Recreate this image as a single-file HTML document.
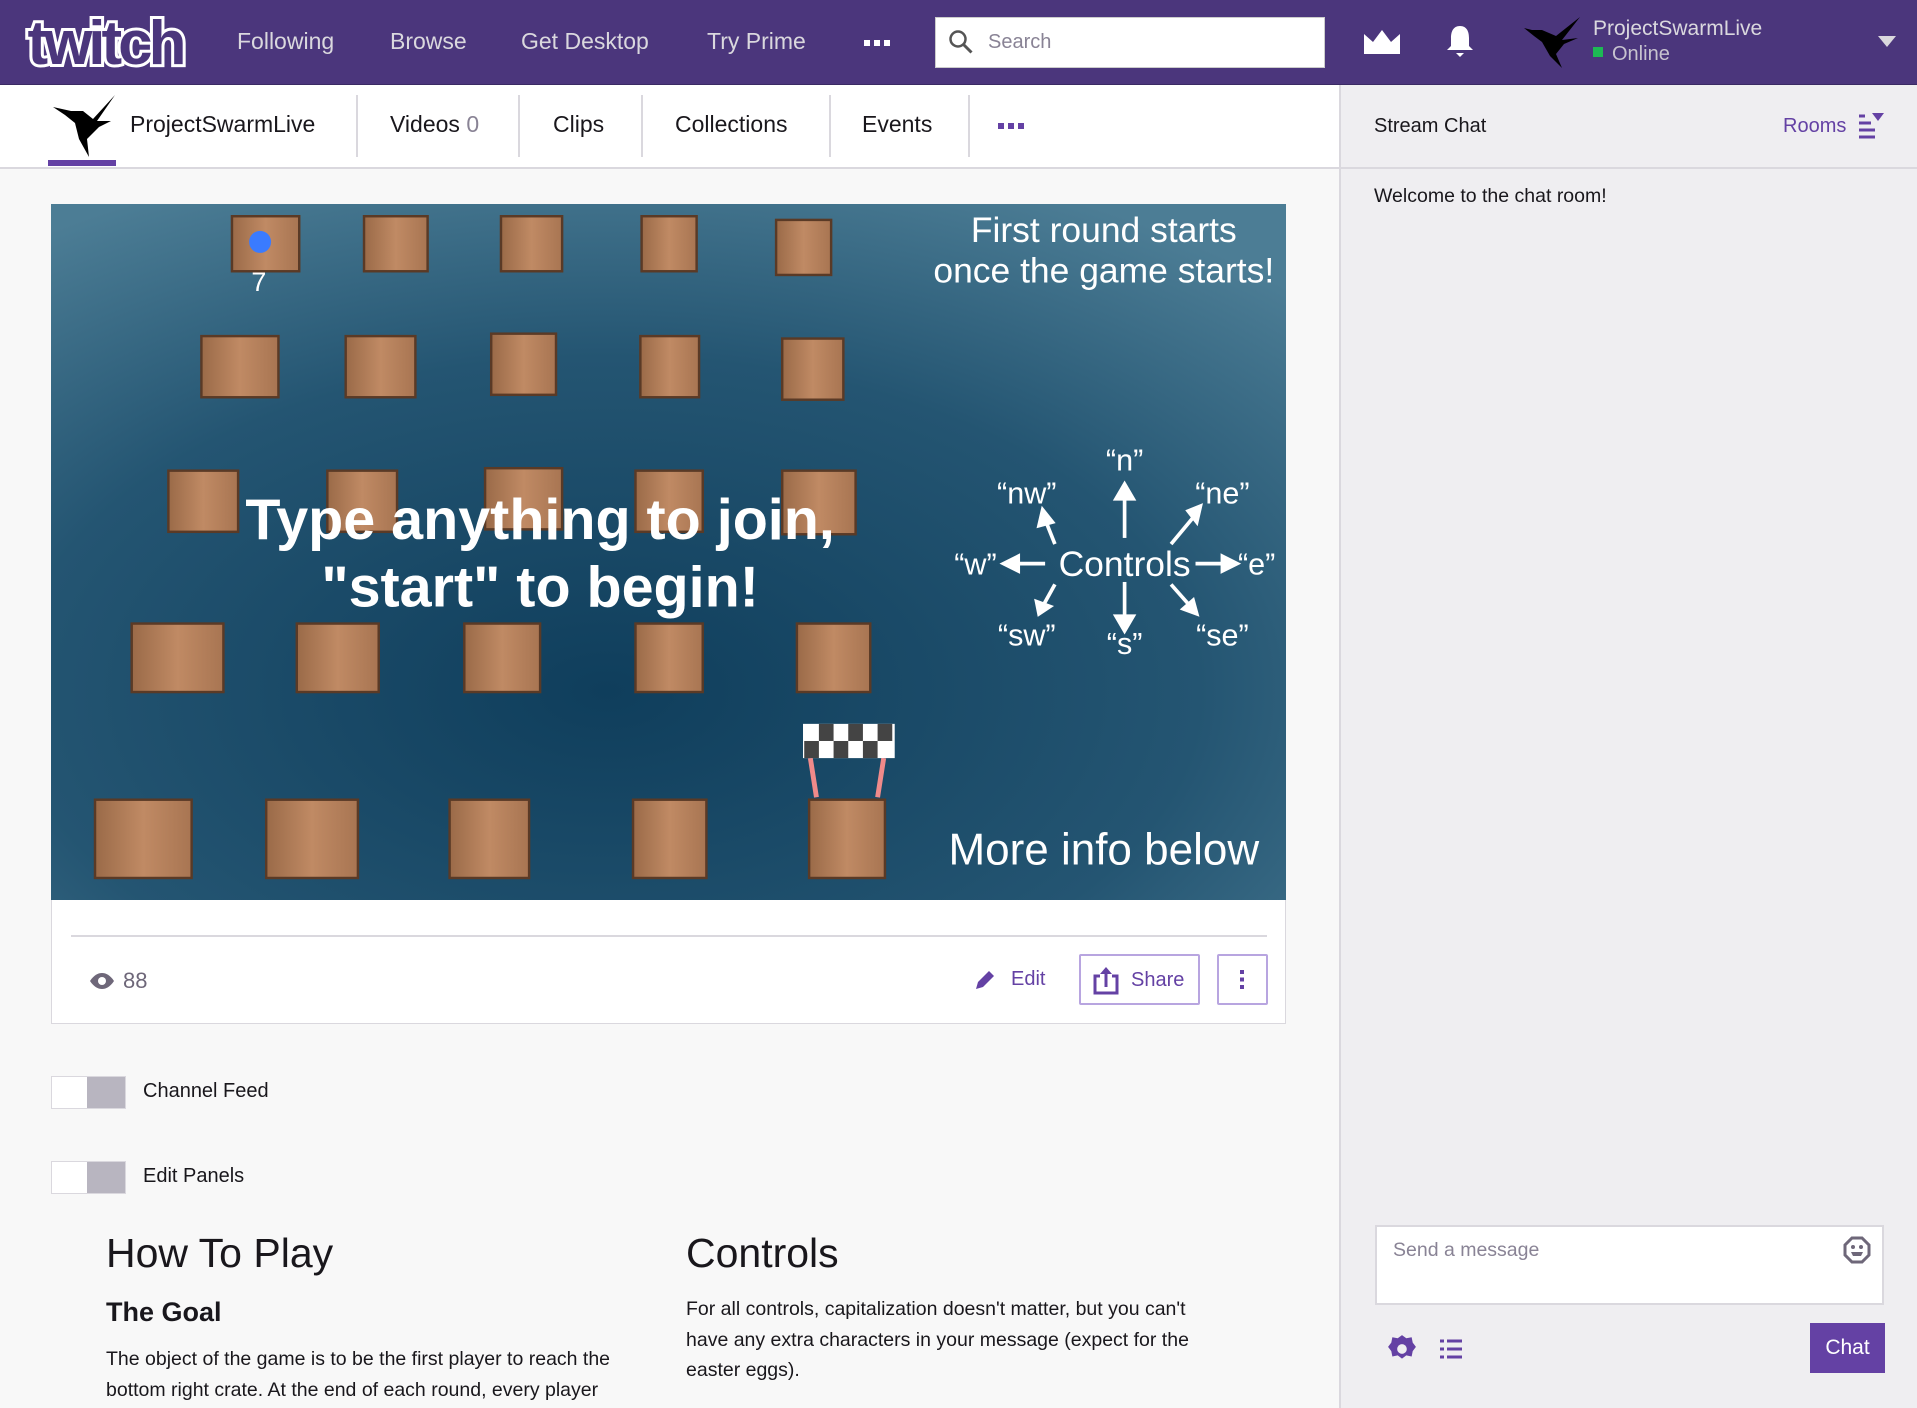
<!DOCTYPE html>
<html><head><meta charset="utf-8">
<style>
*{margin:0;padding:0;box-sizing:border-box}
body{width:1917px;height:1408px;overflow:hidden;background:#f8f8f8;font-family:"Liberation Sans",Arial,sans-serif;position:relative}
.abs{position:absolute}
#top{left:0;top:0;width:1917px;height:85px;background:#4b367c;border-bottom:1px solid #3a2a63}
.nav{color:#dad8de;font-size:23px;top:28px}
#sub{left:0;top:85px;width:1339px;height:84px;background:#fff;border-bottom:2px solid #dad8de}
.tab{font-size:23px;color:#19171c;top:26px}
.sep{top:10px;width:2px;height:62px;background:#dad8de}
#chat{left:1339px;top:85px;width:578px;height:1323px;background:#efeef1;border-left:2px solid #dad8de}
</style></head><body>

<div id="top" class="abs">
  <svg class="abs" style="left:22px;top:10px" width="166" height="64" viewBox="0 0 166 64">
    <text x="83" y="54" text-anchor="middle" font-family="Liberation Sans" font-weight="bold" font-size="62" letter-spacing="-4" fill="#4b367c" stroke="#fff" stroke-width="6" paint-order="stroke" stroke-linejoin="miter">twitch</text>
  </svg>
  <div class="abs nav" style="left:237px">Following</div>
  <div class="abs nav" style="left:390px">Browse</div>
  <div class="abs nav" style="left:521px">Get Desktop</div>
  <div class="abs nav" style="left:707px">Try Prime</div>
  <div class="abs" style="left:864px;top:40px;width:26px;height:6px;background:repeating-linear-gradient(90deg,#fff 0 6px,transparent 6px 10px)"></div>
  <div class="abs" style="left:935px;top:17px;width:390px;height:51px;background:#fff;border:1px solid #ccc">
    <svg class="abs" style="left:12px;top:11px" width="26" height="26" viewBox="0 0 26 26"><circle cx="10" cy="10" r="7.5" fill="none" stroke="#555" stroke-width="2.5"/><path d="M15.5 15.5l8 8" stroke="#555" stroke-width="3"/></svg>
    <div class="abs" style="left:52px;top:13px;font-size:20px;color:#898395">Search</div>
  </div>
  <svg class="abs" style="left:1364px;top:30px" width="36" height="24" viewBox="0 0 36 24"><path d="M0 4l9 8 9-12 9 12 9-8v20h-36z" fill="#fff"/></svg>
  <svg class="abs" style="left:1446px;top:24px" width="28" height="36" viewBox="0 0 28 36"><path d="M14 2c7 0 9 6 9 12v8l4 4h-26l4-4v-8c0-6 2-12 9-12z" fill="#fff"/><path d="M10 29h8l-4 4z" fill="#fff"/></svg>
  <svg class="abs" style="left:1520px;top:16px" width="62" height="54" viewBox="0 0 62 54"><path d="M60 1L36 20 22 14 12 14 4 12 14 20 22 26 30 40 42 52 36 38 44 28 58 22 42 24z" fill="#000"/></svg>
  <div class="abs" style="left:1593px;top:17px;font-size:21px;color:#dad8de">ProjectSwarmLive</div>
  <div class="abs" style="left:1593px;top:47px;width:10px;height:10px;background:#1db954"></div>
  <div class="abs" style="left:1612px;top:43px;font-size:20px;color:#c7c3cf">Online</div>
  <svg class="abs" style="left:1878px;top:36px" width="18" height="12"><path d="M0 0h18l-9 11z" fill="#dad8de"/></svg>
</div>

<div id="sub" class="abs">
  <svg class="abs" style="left:49px;top:8px" width="68" height="66" viewBox="0 0 68 66"><path d="M66 2L44 26 34 18 22 18 4 14 16 22 26 30 30 46 40 64 38 46 50 34 62 28 48 28z" fill="#000"/></svg>
  <div class="abs" style="left:48px;top:75px;width:68px;height:6px;background:#6441a4"></div>
  <div class="abs tab" style="left:130px">ProjectSwarmLive</div>
  <div class="abs sep" style="left:356px"></div>
  <div class="abs tab" style="left:390px">Videos <span style="color:#898395">0</span></div>
  <div class="abs sep" style="left:518px"></div>
  <div class="abs tab" style="left:553px">Clips</div>
  <div class="abs sep" style="left:641px"></div>
  <div class="abs tab" style="left:675px">Collections</div>
  <div class="abs sep" style="left:829px"></div>
  <div class="abs tab" style="left:862px">Events</div>
  <div class="abs sep" style="left:968px"></div>
  <div class="abs" style="left:998px;top:38px;width:26px;height:6px;background:repeating-linear-gradient(90deg,#6441a4 0 6px,transparent 6px 10px)"></div>
</div>

<!-- video -->
<svg class="abs" style="left:51px;top:204px" width="1235" height="696" viewBox="42 167 1010 569" preserveAspectRatio="none">
  <defs>
    <radialGradient id="w" cx="0.45" cy="0.7" r="0.8">
      <stop offset="0" stop-color="#0f3e5c"/><stop offset="0.6" stop-color="#245572"/><stop offset="1" stop-color="#4c7d95"/>
    </radialGradient>
    <linearGradient id="c" x1="0" x2="1"><stop offset="0" stop-color="#9a6a48"/><stop offset="0.5" stop-color="#c08a64"/><stop offset="1" stop-color="#a87552"/></linearGradient>
  </defs>
  <rect x="42" y="167" width="1010" height="569" fill="url(#w)"/>
  <g fill="url(#c)" stroke="#5a3a26" stroke-width="2">
    <rect x="190" y="177" width="55" height="45"/><rect x="298" y="177" width="52" height="45"/><rect x="410" y="177" width="50" height="45"/><rect x="525" y="177" width="45" height="45"/><rect x="635" y="180" width="45" height="45"/>
    <rect x="165" y="275" width="63" height="50"/><rect x="283" y="275" width="57" height="50"/><rect x="402" y="273" width="53" height="50"/><rect x="524" y="275" width="48" height="50"/><rect x="640" y="277" width="50" height="50"/>
    <rect x="138" y="385" width="57" height="50"/><rect x="268" y="385" width="57" height="50"/><rect x="397" y="383" width="63" height="50"/><rect x="520" y="385" width="55" height="50"/><rect x="640" y="385" width="60" height="52"/>
    <rect x="108" y="510" width="75" height="56"/><rect x="243" y="510" width="67" height="56"/><rect x="380" y="510" width="62" height="56"/><rect x="520" y="510" width="55" height="56"/><rect x="652" y="510" width="60" height="56"/>
    <rect x="78" y="654" width="79" height="64"/><rect x="218" y="654" width="75" height="64"/><rect x="368" y="654" width="65" height="64"/><rect x="518" y="654" width="60" height="64"/><rect x="662" y="654" width="62" height="64"/>
  </g>
  <circle cx="213" cy="198" r="9" fill="#3a7bff"/>
  <text x="212" y="238" font-size="22" fill="#fff" text-anchor="middle" font-family="Liberation Sans">7</text>
  <path d="M663 620l5 32M723 620l-5 32" stroke="#f08a8a" stroke-width="4"/>
  <rect x="657" y="592" width="75" height="28" fill="#fff"/>
  <g fill="#444"><rect x="670" y="592" width="12" height="14"/><rect x="694" y="592" width="12" height="14"/><rect x="718" y="592" width="12" height="14"/><rect x="658" y="606" width="12" height="14"/><rect x="682" y="606" width="12" height="14"/><rect x="706" y="606" width="12" height="14"/></g>
  <g font-family="Liberation Sans" fill="#fff" text-anchor="middle">
    <text x="903" y="198" font-size="29">First round starts</text>
    <text x="903" y="231" font-size="29">once the game starts!</text>
    <text x="442" y="441" font-size="47" font-weight="bold">Type anything to join,</text>
    <text x="442" y="496" font-size="47" font-weight="bold">"start" to begin!</text>
    <text x="903" y="707" font-size="36">More info below</text>
    <text x="920" y="471" font-size="29">Controls</text>
    <text x="920" y="385" font-size="25">“n”</text>
    <text x="840" y="412" font-size="25">“nw”</text>
    <text x="1000" y="412" font-size="25">“ne”</text>
    <text x="798" y="470" font-size="25">“w”</text>
    <text x="1028" y="470" font-size="25">“e”</text>
    <text x="840" y="528" font-size="25">“sw”</text>
    <text x="920" y="535" font-size="25">“s”</text>
    <text x="1000" y="528" font-size="25">“se”</text>
  </g>
  <g stroke="#fff" stroke-width="3" fill="#fff">
    <path d="M920 440v-40"/><path d="M913 408l7-12 7 12z"/>
    <path d="M920 476v36"/><path d="M913 504l7 12 7-12z"/>
    <path d="M863 445l-8-20"/><path d="M850 430l3-13 8 10z"/>
    <path d="M958 445l20-24"/><path d="M972 418l10-4-3 13z"/>
    <path d="M855 461h-25"/><path d="M833 455l-12 6 12 6z"/>
    <path d="M978 461h25"/><path d="M1000 455l12 6-12 6z"/>
    <path d="M863 478l-10 18"/><path d="M848 492l2 10 9-6z"/>
    <path d="M958 478l15 17"/><path d="M968 498l11 4-3-11z"/>
  </g>
</svg>

<!-- info card -->
<div class="abs" style="left:51px;top:900px;width:1235px;height:124px;background:#fff;border:1px solid #dad8de;border-top:none">
  <div class="abs" style="left:19px;top:35px;width:1196px;height:2px;background:#dad8de"></div>
  <svg class="abs" style="left:37px;top:72px" width="26" height="18" viewBox="0 0 26 18"><path d="M1 9c4-6 8-8 12-8s8 2 12 8c-4 6-8 8-12 8s-8-2-12-8z" fill="#6e6779"/><circle cx="13" cy="9" r="4" fill="#fff"/></svg>
  <div class="abs" style="left:71px;top:68px;font-size:22px;color:#6e6779">88</div>
  <svg class="abs" style="left:921px;top:68px" width="24" height="24" viewBox="0 0 24 24"><path d="M3 21l2-7 11-11 5 5-11 11z" fill="#6441a4"/></svg>
  <div class="abs" style="left:959px;top:68px;font-size:20px;color:#6441a4">Edit</div>
  <div class="abs" style="left:1027px;top:54px;width:121px;height:51px;border:2px solid #b8a5e0;border-radius:2px">
    <svg class="abs" style="left:12px;top:9px" width="26" height="30" viewBox="0 0 26 30"><path d="M7 11H2v17h22V11h-5" fill="none" stroke="#6441a4" stroke-width="3"/><path d="M13 22V4" stroke="#6441a4" stroke-width="3"/><path d="M7 9l6-7 6 7z" fill="#6441a4"/></svg>
    <div class="abs" style="left:50px;top:13px;font-size:20px;color:#6441a4">Share</div>
  </div>
  <div class="abs" style="left:1165px;top:54px;width:51px;height:51px;border:2px solid #b8a5e0;border-radius:2px">
    <div class="abs" style="left:21px;top:14px;width:4px;height:19px;background:repeating-linear-gradient(#6441a4 0 4px,transparent 4px 7.5px)"></div>
  </div>
</div>

<!-- toggles -->
<div class="abs" style="left:51px;top:1076px;width:75px;height:33px;background:#b8b5c0;border:1px solid #dad8de"><div style="width:35px;height:31px;background:#fff"></div></div>
<div class="abs" style="left:143px;top:1080px;font-size:20px;color:#19171c">Channel Feed</div>
<div class="abs" style="left:51px;top:1161px;width:75px;height:33px;background:#b8b5c0;border:1px solid #dad8de"><div style="width:35px;height:31px;background:#fff"></div></div>
<div class="abs" style="left:143px;top:1165px;font-size:20px;color:#19171c">Edit Panels</div>

<div class="abs" style="left:106px;top:1230px;font-size:41px;color:#19171c">How To Play</div>
<div class="abs" style="left:106px;top:1297px;font-size:27px;font-weight:bold;color:#19171c">The Goal</div>
<div class="abs" style="left:106px;top:1344px;width:560px;font-size:19.5px;line-height:30.5px;color:#19171c">The object of the game is to be the first player to reach the bottom right crate. At the end of each round, every player</div>
<div class="abs" style="left:686px;top:1230px;font-size:41px;color:#19171c">Controls</div>
<div class="abs" style="left:686px;top:1294px;width:545px;font-size:19.5px;line-height:30.5px;color:#19171c">For all controls, capitalization doesn't matter, but you can't have any extra characters in your message (expect for the easter eggs).</div>

<!-- chat -->
<div id="chat" class="abs">
  <div class="abs" style="left:0;top:0;width:576px;height:84px;border-bottom:2px solid #dad8de"></div>
  <div class="abs" style="left:33px;top:30px;font-size:20px;color:#19171c">Stream Chat</div>
  <div class="abs" style="left:442px;top:30px;font-size:20px;color:#6441a4">Rooms</div>
  <svg class="abs" style="left:518px;top:28px" width="26" height="28" viewBox="0 0 26 28"><path d="M0 3h6M0 10h12M0 17h16M0 24h16" stroke="#6441a4" stroke-width="3"/><path d="M13 0h12l-6 8z" fill="#6441a4"/></svg>
  <div class="abs" style="left:33px;top:100px;font-size:19.5px;color:#19171c">Welcome to the chat room!</div>
  <div class="abs" style="left:34px;top:1140px;width:509px;height:80px;background:#fff;border:2px solid #dad8de">
    <div class="abs" style="left:16px;top:12px;font-size:19.5px;color:#898395">Send a message</div>
    <svg class="abs" style="left:466px;top:9px" width="28" height="28" viewBox="0 0 28 28"><path d="M9 2h10l7 7v10l-7 7h-10l-7-7v-10z" fill="none" stroke="#6e6779" stroke-width="3"/><circle cx="10" cy="11" r="2" fill="#6e6779"/><circle cx="18" cy="11" r="2" fill="#6e6779"/><path d="M8 16h12l-2 4h-8z" fill="#6e6779"/></svg>
  </div>
  <svg class="abs" style="left:46px;top:1249px" width="30" height="30" viewBox="0 0 28 28"><path d="M14 1l4 3 5-1 1 5 3 4-3 4-1 5-5-1-4 3-4-3-5 1-1-5-3-4 3-4 1-5 5 1z" fill="#6441a4"/><circle cx="14" cy="14" r="4.5" fill="#efeef1"/></svg>
  <svg class="abs" style="left:99px;top:1254px" width="22" height="20" viewBox="0 0 22 20"><path d="M0 2h4M7 2h15M0 10h4M7 10h15M0 18h4M7 18h15" stroke="#6441a4" stroke-width="3"/></svg>
  <div class="abs" style="left:469px;top:1238px;width:75px;height:50px;background:#6441a4;color:#fff;font-size:21px;text-align:center;line-height:50px">Chat</div>
</div>
</body></html>
